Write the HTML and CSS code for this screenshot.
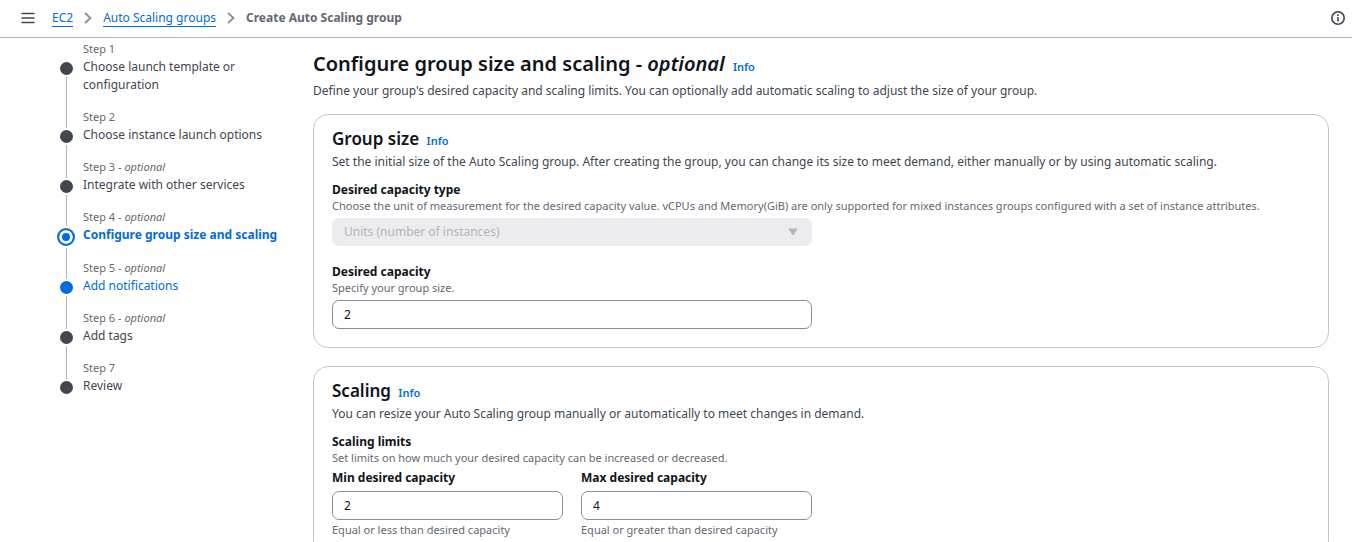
FILE: index.html
```html
<!DOCTYPE html>
<html lang="en">
<head>
<meta charset="utf-8">
<meta name="viewport" content="width=device-width, initial-scale=1">
<title>Create Auto Scaling group | EC2</title>
<link rel="stylesheet" href="styles.css">
</head>
<body>
<header class="topbar">
  <button class="icon-button" type="button" aria-label="Open navigation">
    <svg width="14" height="14" viewBox="0 0 14 14" fill="none" stroke="#424650" stroke-width="1.700"><path d="M.5 2.500h13M.5 7h13M.5 11.500h13"/></svg>
  </button>
  <nav class="breadcrumbs" aria-label="Breadcrumbs">
    <a href="#">EC2</a>
    <svg width="8" height="12" viewBox="0 0 8 12" fill="none" stroke="#8c8c94" stroke-width="1.800"><path d="M1 1l5.500 5L1 11"/></svg>
    <a href="#">Auto Scaling groups</a>
    <svg width="8" height="12" viewBox="0 0 8 12" fill="none" stroke="#8c8c94" stroke-width="1.800"><path d="M1 1l5.500 5L1 11"/></svg>
    <span class="current">Create Auto Scaling group</span>
  </nav>
  <button class="icon-button" type="button" aria-label="Open help panel">
    <svg width="14" height="14" viewBox="0 0 14 14" fill="none" stroke="#424650" stroke-width="1.600"><circle cx="7" cy="7" r="6.200"/><path d="M7 6v4.500M7 3.300v1.600"/></svg>
  </button>
</header>
<div class="layout">
  <nav class="wizard" aria-label="Steps">
    <ol class="steps">
      <li class="step"><span class="label">Step 1</span><span class="dot"></span><span class="title">Choose launch template or configuration</span></li>
      <li class="step"><span class="label">Step 2</span><span class="dot"></span><span class="title">Choose instance launch options</span></li>
      <li class="step"><span class="label">Step 3 - <em>optional</em></span><span class="dot"></span><span class="title">Integrate with other services</span></li>
      <li class="step active" aria-current="step"><span class="label">Step 4 - <em>optional</em></span><span class="dot"></span><span class="title">Configure group size and scaling</span></li>
      <li class="step next"><span class="label">Step 5 - <em>optional</em></span><span class="dot"></span><a class="title" href="#">Add notifications</a></li>
      <li class="step"><span class="label">Step 6 - <em>optional</em></span><span class="dot"></span><span class="title">Add tags</span></li>
      <li class="step"><span class="label">Step 7</span><span class="dot"></span><span class="title">Review</span></li>
    </ol>
  </nav>
  <main class="content">
    <div class="page-heading">
      <h1>Configure group size and scaling - <em>optional</em> <a class="info" href="#">Info</a></h1>
      <p class="description">Define your group's desired capacity and scaling limits. You can optionally add automatic scaling to adjust the size of your group.</p>
    </div>
    <section class="card">
      <h2>Group size <a class="info" href="#">Info</a></h2>
      <p class="description">Set the initial size of the Auto Scaling group. After creating the group, you can change its size to meet demand, either manually or by using automatic scaling.</p>
      <div class="field">
        <label for="type">Desired capacity type</label>
        <p class="hint">Choose the unit of measurement for the desired capacity value. vCPUs and Memory(GiB) are only supported for mixed instances groups configured with a set of instance attributes.</p>
        <div class="select">
          <select id="type" disabled><option>Units (number of instances)</option></select>
          <svg width="10" height="8" viewBox="0 0 10 8" fill="#b4b4bb" stroke="#b4b4bb" stroke-linejoin="round"><path d="M1 1h8L5 7z"/></svg>
        </div>
      </div>
      <div class="field">
        <label for="desired">Desired capacity</label>
        <p class="hint">Specify your group size.</p>
        <input id="desired" type="text" inputmode="numeric" value="2">
      </div>
    </section>
    <section class="card">
      <h2>Scaling <a class="info" href="#">Info</a></h2>
      <p class="description">You can resize your Auto Scaling group manually or automatically to meet changes in demand.</p>
      <fieldset class="limits">
        <legend>Scaling limits</legend>
        <p class="hint">Set limits on how much your desired capacity can be increased or decreased.</p>
        <div class="pair">
          <div>
            <label for="min">Min desired capacity</label>
            <input id="min" type="text" inputmode="numeric" value="2">
            <p class="hint">Equal or less than desired capacity</p>
          </div>
          <div>
            <label for="max">Max desired capacity</label>
            <input id="max" type="text" inputmode="numeric" value="4">
            <p class="hint">Equal or greater than desired capacity</p>
          </div>
        </div>
      </fieldset>
    </section>
  </main>
</div>
</body>
</html>
```
FILE: styles.css
```css
* { box-sizing: border-box; }

body {
  margin: 0;
  background: #fff;
  color: #424650;
  font: 12px/18px "Noto Sans", "Open Sans", sans-serif;
}

h1, h2, p, ol, fieldset, legend { margin: 0; padding: 0; border: 0; }

a { color: #006ce0; }

.topbar {
  display: flex;
  align-items: center;
  gap: 17px;
  height: 38px;
  padding: 0 7px 2px 21px;
  border-bottom: 1px solid #b4b4bb;
}

.icon-button {
  display: flex;
  padding: 0;
  border: 0;
  background: none;
}

.breadcrumbs {
  display: flex;
  flex: 1;
  align-items: center;
  gap: 11px;
}

.breadcrumbs a { text-underline-offset: 4px; }

.current { color: #656871; font-weight: 700; }

.layout {
  display: grid;
  grid-template-columns: 230px minmax(0, 1fr);
  gap: 26px;
  padding: 0 23px 8px 57px;
}

.steps { padding-top: 1px; list-style: none; }

.step {
  position: relative;
  display: grid;
  grid-template-columns: 18px 1fr;
  column-gap: 8px;
}

.label {
  grid-column: 2;
  color: #656871;
  font-size: 11px;
  line-height: 19px;
}

.dot {
  z-index: 1;
  justify-self: center;
  width: 17px;
  height: 17px;
  margin-top: 2px;
  border: 2px solid #fff;
  border-radius: 50%;
  background: #424650;
}

.title {
  padding: 0 12px 13px 0;
  text-decoration: none;
}

/* connector between a step's dot and the one below it */
.step:not(:last-child)::after {
  content: "";
  position: absolute;
  top: 29px;
  bottom: -29px;
  left: 9px;
  width: 1px;
  background: #b4b4bb;
}

.active .dot {
  width: 18px;
  height: 18px;
  border: 2px solid #006ce0;
  background: #006ce0;
  box-shadow: inset 0 0 0 3px #fff, 0 0 0 2px #fff;
}

.active .title {
  padding: 0 0 14px;
  color: #006ce0;
  font-weight: 700;
}

.next .dot { background: #006ce0; }

h1, h2 { color: #0f141a; font-weight: 600; }

h1 { font-size: 20px; line-height: 27px; }

h2 { font-size: 17px; line-height: 22px; }

legend, label { color: #0f141a; font-weight: 700; }

.info {
  margin-left: 3px;
  font-size: 11px;
  font-weight: 600;
  text-decoration: none;
}

.description { padding-top: 1px; }

.page-heading { padding: 12px 0 14px; }

.page-heading .description { padding-top: 2px; }

.page-heading h1 + .description { line-height: 18px; }

.card {
  padding: 13px 18px 18px;
  border: 1px solid #c6c6cd;
  border-radius: 15px;
}

.page-heading + .card { margin-top: 0; }

.card + .card { margin-top: 18px; }

.field { margin-top: 10px; }

.field + .field { margin-top: 17px; }

label { display: block; }

.hint { color: #656871; font-size: 11px; line-height: 14px; }

input, select {
  display: block;
  width: 100%;
  height: 29px;
  padding: 0 11px;
  border: 1px solid #8c8c94;
  border-radius: 7px;
  background: #fff;
  color: #0f141a;
  font: inherit;
}

.field input, .select { max-width: 480px; margin-top: 5px; }

.select { position: relative; }

.select select {
  appearance: none;
  height: 28px;
  border-color: #ebebf0;
  background: #ebebf0;
  color: #b4b4bb;
  opacity: 1;
}

.select svg { position: absolute; top: 10px; right: 14px; }

.limits { margin-top: 10px; }

.pair {
  display: grid;
  grid-template-columns: 1fr 1fr;
  gap: 18px;
  max-width: 480px;
  margin-top: 4px;
}

.pair input { margin: 4px 0 3px; }
```
